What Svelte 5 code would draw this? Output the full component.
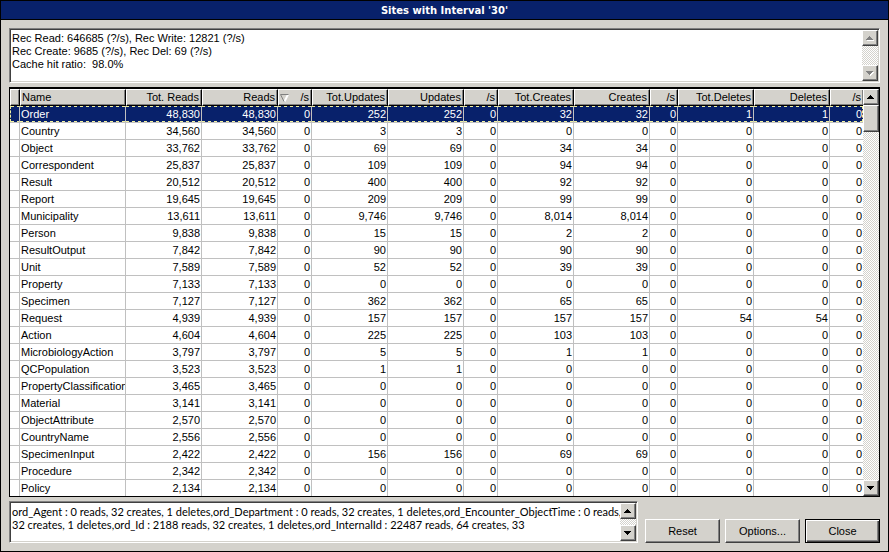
<script>
  const columns = [
    { label: '', width: 10 },
    { label: 'Name' },
    { label: 'Tot. Reads', width: 76 },
    { label: 'Reads', width: 76 },
    { label: '/s', width: 34, sorted: true },
    { label: 'Tot.Updates', width: 76 },
    { label: 'Updates', width: 76 },
    { label: '/s', width: 34 },
    { label: 'Tot.Creates', width: 76 },
    { label: 'Creates', width: 76 },
    { label: '/s', width: 28 },
    { label: 'Tot.Deletes', width: 76 },
    { label: 'Deletes', width: 76 },
    { label: '/s', width: 33 }
  ];

  // name, reads, updates, creates, deletes
  const sites = [
    ['Order', 48830, 252, 32, 1],
    ['Country', 34560, 3, 0, 0],
    ['Object', 33762, 69, 34, 0],
    ['Correspondent', 25837, 109, 94, 0],
    ['Result', 20512, 400, 92, 0],
    ['Report', 19645, 209, 99, 0],
    ['Municipality', 13611, 9746, 8014, 0],
    ['Person', 9838, 15, 2, 0],
    ['ResultOutput', 7842, 90, 90, 0],
    ['Unit', 7589, 52, 39, 0],
    ['Property', 7133, 0, 0, 0],
    ['Specimen', 7127, 362, 65, 0],
    ['Request', 4939, 157, 157, 54],
    ['Action', 4604, 225, 103, 0],
    ['MicrobiologyAction', 3797, 5, 1, 0],
    ['QCPopulation', 3523, 1, 0, 0],
    ['PropertyClassificationN', 3465, 0, 0, 0],
    ['Material', 3141, 0, 0, 0],
    ['ObjectAttribute', 2570, 0, 0, 0],
    ['CountryName', 2556, 0, 0, 0],
    ['SpecimenInput', 2422, 156, 69, 0],
    ['Procedure', 2342, 0, 0, 0],
    ['Policy', 2134, 0, 0, 0]
  ];

  let selected = $state(0);

  const format = (n) => n.toLocaleString('en-US');
  const cells = ([, ...counts]) => counts.flatMap((n) => [format(n), format(n), '0']);

  const summary = `Rec Read: 646685 (?/s), Rec Write: 12821 (?/s)
Rec Create: 9685 (?/s), Rec Del: 69 (?/s)
Cache hit ratio:  98.0%`;
  const details =
    'ord_Agent : 0 reads, 32 creates, 1 deletes,ord_Department : 0 reads, 32 creates, 1 deletes,ord_Encounter_ObjectTime : 0 reads,\n32 creates, 1 deletes,ord_Id : 2188 reads, 32 creates, 1 deletes,ord_InternalId : 22487 reads, 64 creates, 33';
</script>

{#snippet arrow(down, disabled)}
  <button class="arrow" type="button" {disabled} aria-label={down ? 'Scroll down' : 'Scroll up'}>
    <svg width="8" height="5" viewBox="0 0 8 5" shape-rendering="crispEdges" aria-hidden="true">
      {#if disabled}
        <path fill="#fff" d={down ? 'M1 1h7v1h-1v1h-1v1h-1v1h-1v-1h-1v-1h-1v-1h-1z' : 'M4 1h1v1h1v1h1v1h1v1h-7v-1h1v-1h1v-1h1z'} />
      {/if}
      <path fill={disabled ? '#808080' : '#000'} d={down ? 'M0 0h7v1h-1v1h-1v1h-1v1h-1v-1h-1v-1h-1v-1h-1z' : 'M3 0h1v1h1v1h1v1h1v1h-7v-1h1v-1h1v-1h1z'} />
    </svg>
  </button>
{/snippet}

<main class="window">
  <h1>Sites with Interval '30'</h1>

  <div class="content">
    <div class="memo summary">
      <textarea readonly aria-label="Summary" value={summary}></textarea>
      <div class="scrollbar">
        {@render arrow(false, true)}
        <div class="track"></div>
        {@render arrow(true, true)}
      </div>
    </div>

    <div class="grid">
      <div class="viewport">
        <table>
          <colgroup>
            {#each columns as column}
              <col style:width={column.width ? `${column.width}px` : null} />
            {/each}
          </colgroup>
          <thead>
            <tr>
              {#each columns as column}
                <th scope="col">
                  <span class="head">
                    {#if column.sorted}
                      <svg class="sort" width="9" height="8" viewBox="0 0 9 8" aria-hidden="true">
                        <path d="M8 .5L4.5 7.5" stroke="#fff" stroke-width="2" fill="none" />
                        <path d="M8.5 .5H.5L4 7.5" stroke="#808080" fill="none" />
                      </svg>
                    {/if}
                    <span class="label">{column.label}</span>
                  </span>
                </th>
              {/each}
            </tr>
          </thead>
          <tbody>
            {#each sites as site, i}
              <tr class:selected={i === selected} onclick={() => (selected = i)}>
                <td></td>
                <td class="name">{site[0]}</td>
                {#each cells(site) as value}
                  <td>{value}</td>
                {/each}
              </tr>
            {/each}
          </tbody>
        </table>
      </div>
      <div class="scrollbar">
        {@render arrow(false, false)}
        <div class="track"><div class="thumb"></div></div>
        {@render arrow(true, false)}
      </div>
    </div>

    <div class="footer">
      <div class="memo details">
        <textarea readonly aria-label="Details" value={details}></textarea>
        <div class="scrollbar">
          {@render arrow(false, false)}
          <div class="track"></div>
          {@render arrow(true, false)}
        </div>
      </div>
      <div class="actions">
        <button class="push" type="button">Reset</button>
        <button class="push" type="button">Options...</button>
        <button class="push default" type="button">Close</button>
      </div>
    </div>
  </div>
</main>

<style>
  :global(body) {
    margin: 0;
  }

  .window,
  .window * {
    box-sizing: border-box;
  }

  .window {
    --face: #d4d2cc;
    --navy: #08216b;
    --focus: #f0f0a0;
    display: flex;
    flex-direction: column;
    min-height: 100vh;
    border: 1px solid #000;
    background: var(--face);
    color: #000;
    font: 11px/13px 'Liberation Sans', Arial, sans-serif;
  }

  h1 {
    margin: 0;
    height: 19px;
    border-bottom: 1px solid #000;
    background: var(--navy);
    color: #fff;
    font: bold 10px/19px 'DejaVu Sans', sans-serif;
    text-align: center;
  }

  .content {
    flex: 1;
    display: flex;
    flex-direction: column;
    gap: 4px;
    padding: 8px;
  }

  .memo {
    display: flex;
    border: 1px solid;
    border-color: #808080 #fff #fff #808080;
    box-shadow: inset 1px 1px #404040, inset -1px -1px var(--face);
    padding: 1px;
    background: #fff;
  }

  .summary {
    height: 55px;
  }

  .details {
    flex: 1;
    min-width: 0;
    height: 42px;
    font-family: Lato, 'Liberation Sans', sans-serif;
  }

  textarea {
    flex: 1;
    min-width: 0;
    margin: 0;
    padding: 2px 0 0 1px;
    border: 0;
    outline: 0;
    resize: none;
    overflow: hidden;
    background: transparent;
    color: inherit;
    font: inherit;
    white-space: pre;
  }

  .scrollbar {
    flex: none;
    display: flex;
    flex-direction: column;
    width: 16px;
  }

  .track {
    flex: 1;
    background: repeating-conic-gradient(#fff 0 25%, var(--face) 0 50%) 0 0 / 2px 2px;
  }

  .arrow,
  .thumb,
  .push {
    border: 1px solid;
    border-color: #fff #404040 #404040 #fff;
    box-shadow: inset -1px -1px #808080;
    background: var(--face);
  }

  .arrow {
    flex: none;
    display: flex;
    align-items: center;
    justify-content: center;
    width: 16px;
    height: 16px;
    padding: 0;
  }

  .thumb {
    height: 27px;
  }

  .grid {
    display: flex;
    border: 1px solid #000;
    border-top-width: 2px;
    background: #fff;
  }

  .viewport {
    flex: 1;
    min-width: 0;
    height: 407px;
    overflow: hidden;
  }

  table {
    width: 100%;
    table-layout: fixed;
    border-collapse: separate;
    border-spacing: 0;
  }

  th {
    height: 17px;
    padding: 0;
    border: 1px solid;
    border-color: #fff #000 #000 #fff;
    box-shadow: inset -1px -1px #808080;
    background: var(--face);
    font-weight: normal;
    text-align: right;
  }

  th:nth-child(2) .label {
    margin-left: 0;
  }

  .head {
    display: flex;
    align-items: center;
    height: 15px;
    padding: 0 2px 0 1px;
  }

  .label {
    margin-left: auto;
  }

  .sort {
    flex: none;
  }

  td {
    height: 17px;
    padding: 1px 1px 0;
    border-right: 1px solid #c0c0c0;
    border-bottom: 1px solid #c0c0c0;
    overflow: hidden;
    text-align: right;
    white-space: nowrap;
  }

  th:last-child,
  td:last-child {
    border-right: 0;
  }

  .name {
    text-align: left;
  }

  .selected td {
    position: relative;
    background: var(--navy);
    background-clip: padding-box;
    color: #fff;
  }

  .selected td::after {
    content: '';
    position: absolute;
    inset: 0;
    background:
      repeating-linear-gradient(90deg, var(--focus) 0 3px, transparent 3px 6px) top / 100% 1px no-repeat,
      repeating-linear-gradient(90deg, var(--focus) 0 3px, transparent 3px 6px) bottom / 100% 1px no-repeat;
  }

  .selected td:first-child::after {
    border-left: 1px dashed var(--focus);
  }

  .selected td:last-child::after {
    border-right: 1px dashed var(--focus);
  }

  .footer {
    display: flex;
    align-items: flex-end;
    gap: 7px;
  }

  .actions {
    display: flex;
    gap: 5px;
  }

  .push {
    width: 75px;
    height: 24px;
    padding: 0;
    color: inherit;
    font: inherit;
  }

  .default {
    border-color: #000;
    box-shadow: inset 1px 1px #fff, inset -1px -1px #404040, inset -2px -2px #808080;
  }
</style>
